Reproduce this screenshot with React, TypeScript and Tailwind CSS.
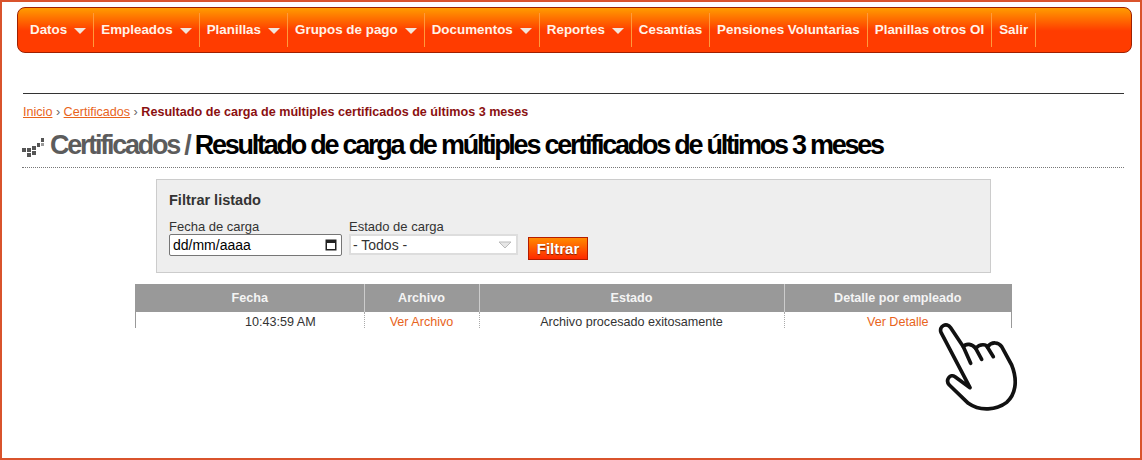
const menu = [
  { label: 'Datos', arrow: true },
  { label: 'Empleados', arrow: true },
  { label: 'Planillas', arrow: true },
  { label: 'Grupos de pago', arrow: true },
  { label: 'Documentos', arrow: true },
  { label: 'Reportes', arrow: true },
  { label: 'Cesantías' },
  { label: 'Pensiones Voluntarias' },
  { label: 'Planillas otros OI' },
  { label: 'Salir' },
]

function HandPointer() {
  return (
    <svg
      className="absolute left-[928px] top-[313px]"
      width="95"
      height="100"
      viewBox="0 0 285 300"
      fill="#fff"
      stroke="#111"
      strokeWidth="11"
      strokeLinecap="round"
      strokeLinejoin="round"
    >
      <path d="M120 218 L33 52 C26 34 50 20 62 38 L100 95 C108 84 126 86 137 100 C150 85 170 88 172 96 C186 78 206 82 215 95 L245 150 C265 200 255 240 230 262 C200 285 150 290 115 265 L58 210 C45 195 60 175 75 185 L120 218" />
      <path d="M100 95 L122 145 M137 100 L155 133 M172 96 L190 125" fill="none" />
    </svg>
  )
}

export default function App() {
  return (
    <div className="relative h-[460px] w-[1142px] overflow-hidden border-2 border-[#d9532c] bg-white font-['Liberation_Sans',Arial,sans-serif]">
      {/* Menu */}
      <nav className="ml-[15px] mt-[5px] flex h-[46px] w-[1115px] items-center rounded-lg border border-[#a02000] bg-[linear-gradient(to_bottom,#ff9c00_0%,#ff3c00_52%,#ff3c00_100%)] pl-[5px]">
        {menu.map((item) => (
          <div
            key={item.label}
            className="flex h-[34px] items-center gap-[7px] border-r border-[#ff9a3c] px-[7px] text-[13.4px] font-bold text-[#fff4e8]"
          >
            <span>{item.label}</span>
            {item.arrow && (
              <span className="mt-[2px] h-0 w-0 border-x-[6px] border-t-[6px] border-x-transparent border-t-[#f2e6dc]" />
            )}
          </div>
        ))}
      </nav>

      <div className="ml-[21px] mt-[40px] w-[1101px] border-t border-[#333]" />

      {/* Breadcrumb */}
      <div className="ml-[21px] mt-[11px] text-[12.6px] leading-[15px] text-[#666]">
        <a className="text-[#e8641c] underline">Inicio</a> ›{' '}
        <a className="text-[#e8641c] underline">Certificados</a> ›{' '}
        <strong className="text-[#8b1010]">Resultado de carga de múltiples certificados de últimos 3 meses</strong>
      </div>

      {/* Title */}
      <div className="ml-[20px] mt-[8px] flex h-[40px] w-[1102px] items-center gap-[6px] border-b border-dotted border-[#777] pb-[4px]">
        <svg width="22" height="20" viewBox="0 0 22 20" fill="#555" className="mt-[4px] shrink-0">
          <rect x="0" y="10" width="4" height="4" />
          <rect x="5" y="10" width="4" height="4" />
          <rect x="5" y="15" width="4" height="4" />
          <rect x="10" y="8" width="4" height="4" />
          <rect x="10" y="13" width="4" height="4" />
          <rect x="15" y="5" width="3" height="4" />
          <rect x="19" y="0" width="3" height="4" />
          <rect x="19" y="5" width="3" height="3" fill="#999" />
        </svg>
        <h1 className="whitespace-nowrap text-[27px] font-bold tracking-[-2.25px] text-black">
          <span className="text-[#5c5c5c]">Certificados / </span>Resultado de carga de múltiples certificados de últimos 3 meses
        </h1>
      </div>

      {/* Filter */}
      <div className="ml-[154px] mt-[11px] h-[94px] w-[835px] border border-[#ccc] bg-[#eee] pl-3 pt-[12px] text-[#333]">
        <div className="text-[14.5px] font-bold leading-4">Filtrar listado</div>
        <div className="mt-[11px] flex items-start gap-[7px]">
          <div>
            <div className="text-[13px] leading-[15px]">Fecha de carga</div>
            <div className="flex h-[22px] w-[173px] items-center justify-between rounded-[2px] border border-[#767676] bg-white px-[3px] text-sm text-black">
              <span>dd/mm/aaaa</span>
              <svg width="14" height="14" viewBox="0 0 14 14" fill="#222">
                <path d="M1.5 1.5h11v11h-11z M3 5v6h8V5z" fillRule="evenodd" />
              </svg>
            </div>
          </div>
          <div>
            <div className="text-[13px] leading-[15px]">Estado de carga</div>
            <div className="flex h-[21px] w-[169px] items-center justify-between border-2 border-[#ddd] bg-white pl-[2px] pr-[4px] text-sm text-[#333]">
              <span>- Todos -</span>
              <svg width="14" height="8" viewBox="0 0 14 8" fill="#e6e6e6" stroke="#bbb">
                <path d="M1 1h12L7 7z" />
              </svg>
            </div>
          </div>
          <button className="ml-[3px] mt-[18px] h-[23px] w-[60px] border border-[#b51c00] bg-[linear-gradient(to_bottom,#ff8a00,#ff2a00)] text-[15px] font-bold text-white [text-shadow:0_1px_1px_#802000]">
            Filtrar
          </button>
        </div>
      </div>

      {/* Results */}
      <div className="ml-[133px] mt-[11px] h-[44px] w-[877px] overflow-hidden border-x border-[#999]">
        <table className="w-full table-fixed border-collapse text-[12.6px]">
          <colgroup>
            <col className="w-[228px]" />
            <col className="w-[115px]" />
            <col className="w-[305px]" />
            <col />
          </colgroup>
          <thead>
            <tr className="h-[28px] bg-[#999] font-bold text-[#f4f4f4]">
              <th className="border-r border-[#ccc]">Fecha</th>
              <th className="border-r border-[#ccc]">Archivo</th>
              <th className="border-r border-[#ccc]">Estado</th>
              <th>Detalle por empleado</th>
            </tr>
          </thead>
          <tbody>
            <tr className="h-[20px] text-center text-[#333]">
              <td className="border-r border-dotted border-[#aaa] pl-[109px] text-left">10:43:59 AM</td>
              <td className="border-r border-dotted border-[#aaa] text-[#e8641c]">Ver Archivo</td>
              <td className="border-r border-dotted border-[#aaa]">Archivo procesado exitosamente</td>
              <td className="text-[#e8641c]">Ver Detalle</td>
            </tr>
          </tbody>
        </table>
      </div>

      <HandPointer />
    </div>
  )
}
